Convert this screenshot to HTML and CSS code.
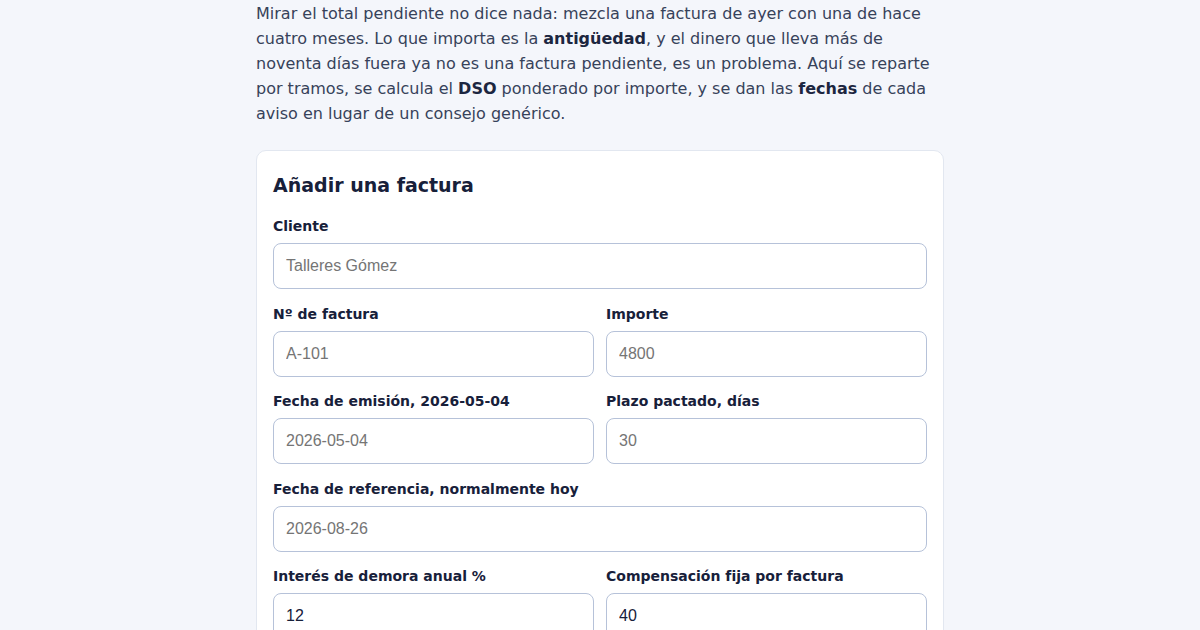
FILE: index.html
```html
<!DOCTYPE html>
<html lang="es">
<head>
<meta charset="utf-8">
<link rel="stylesheet" href="styles.css">
</head>
<body>
<main class="page">
  <p class="intro">Mirar el total pendiente no dice nada: mezcla una factura de ayer con una de hace cuatro meses. Lo que importa es la <strong>antigüedad</strong>, y el dinero que lleva más de noventa días fuera ya no es una factura pendiente, es un problema. Aquí se reparte por tramos, se calcula el <strong>DSO</strong> ponderado por importe, y se dan las <strong>fechas</strong> de cada aviso en lugar de un consejo genérico.</p>
  <section class="card">
    <h2 class="card-title">Añadir una factura</h2>
    <div class="grid">
      <label class="field full"><span class="label">Cliente</span><input class="input" type="text" placeholder="Talleres Gómez"></label>
      <label class="field"><span class="label">Nº de factura</span><input class="input" type="text" placeholder="A-101"></label>
      <label class="field"><span class="label">Importe</span><input class="input" type="text" placeholder="4800"></label>
      <label class="field"><span class="label">Fecha de emisión, 2026-05-04</span><input class="input" type="text" placeholder="2026-05-04"></label>
      <label class="field"><span class="label">Plazo pactado, días</span><input class="input" type="text" placeholder="30"></label>
      <label class="field full"><span class="label">Fecha de referencia, normalmente hoy</span><input class="input" type="text" placeholder="2026-08-26"></label>
      <label class="field"><span class="label">Interés de demora anual %</span><input class="input" type="text" value="12"></label>
      <label class="field"><span class="label">Compensación fija por factura</span><input class="input" type="text" value="40"></label>
    </div>
  </section>
</main>
</body>
</html>
```
FILE: styles.css
```css
html, body {
  margin: 0;
  padding: 0;
  background: #f4f6fb;
}
body {
  font-family: "DejaVu Sans", sans-serif;
  color: #37425a;
}
.page {
  width: 688px;
  margin: 0 auto;
}
.intro {
  margin: 0;
  padding-top: 1px;
  font-size: 16px;
  line-height: 25px;
  color: #37425a;
}
.intro strong {
  color: #1c2640;
}
.card {
  margin-top: 24px;
  background: #ffffff;
  border: 1px solid #e2e7f0;
  border-radius: 10px;
  padding: 16px;
}
.card-title {
  margin: 4px 0 17px;
  font-size: 19px;
  line-height: 28px;
  font-weight: bold;
  color: #17203a;
}
.grid {
  display: grid;
  grid-template-columns: 1fr 1fr;
  column-gap: 12px;
  row-gap: 14.5px;
}
.field {
  display: flex;
  flex-direction: column;
  gap: 7px;
}
.field.full {
  grid-column: 1 / -1;
}
.label {
  font-size: 14px;
  line-height: 20px;
  font-weight: bold;
  color: #17203a;
}
.input {
  box-sizing: border-box;
  height: 46px;
  padding: 0 12px;
  border: 1px solid #b6c2d9;
  border-radius: 8px;
  background: #ffffff;
  font-family: "Liberation Sans", Arial, sans-serif;
  font-size: 16px;
  color: #17203a;
  outline: none;
}
.input::placeholder {
  color: #757575;
}
```
